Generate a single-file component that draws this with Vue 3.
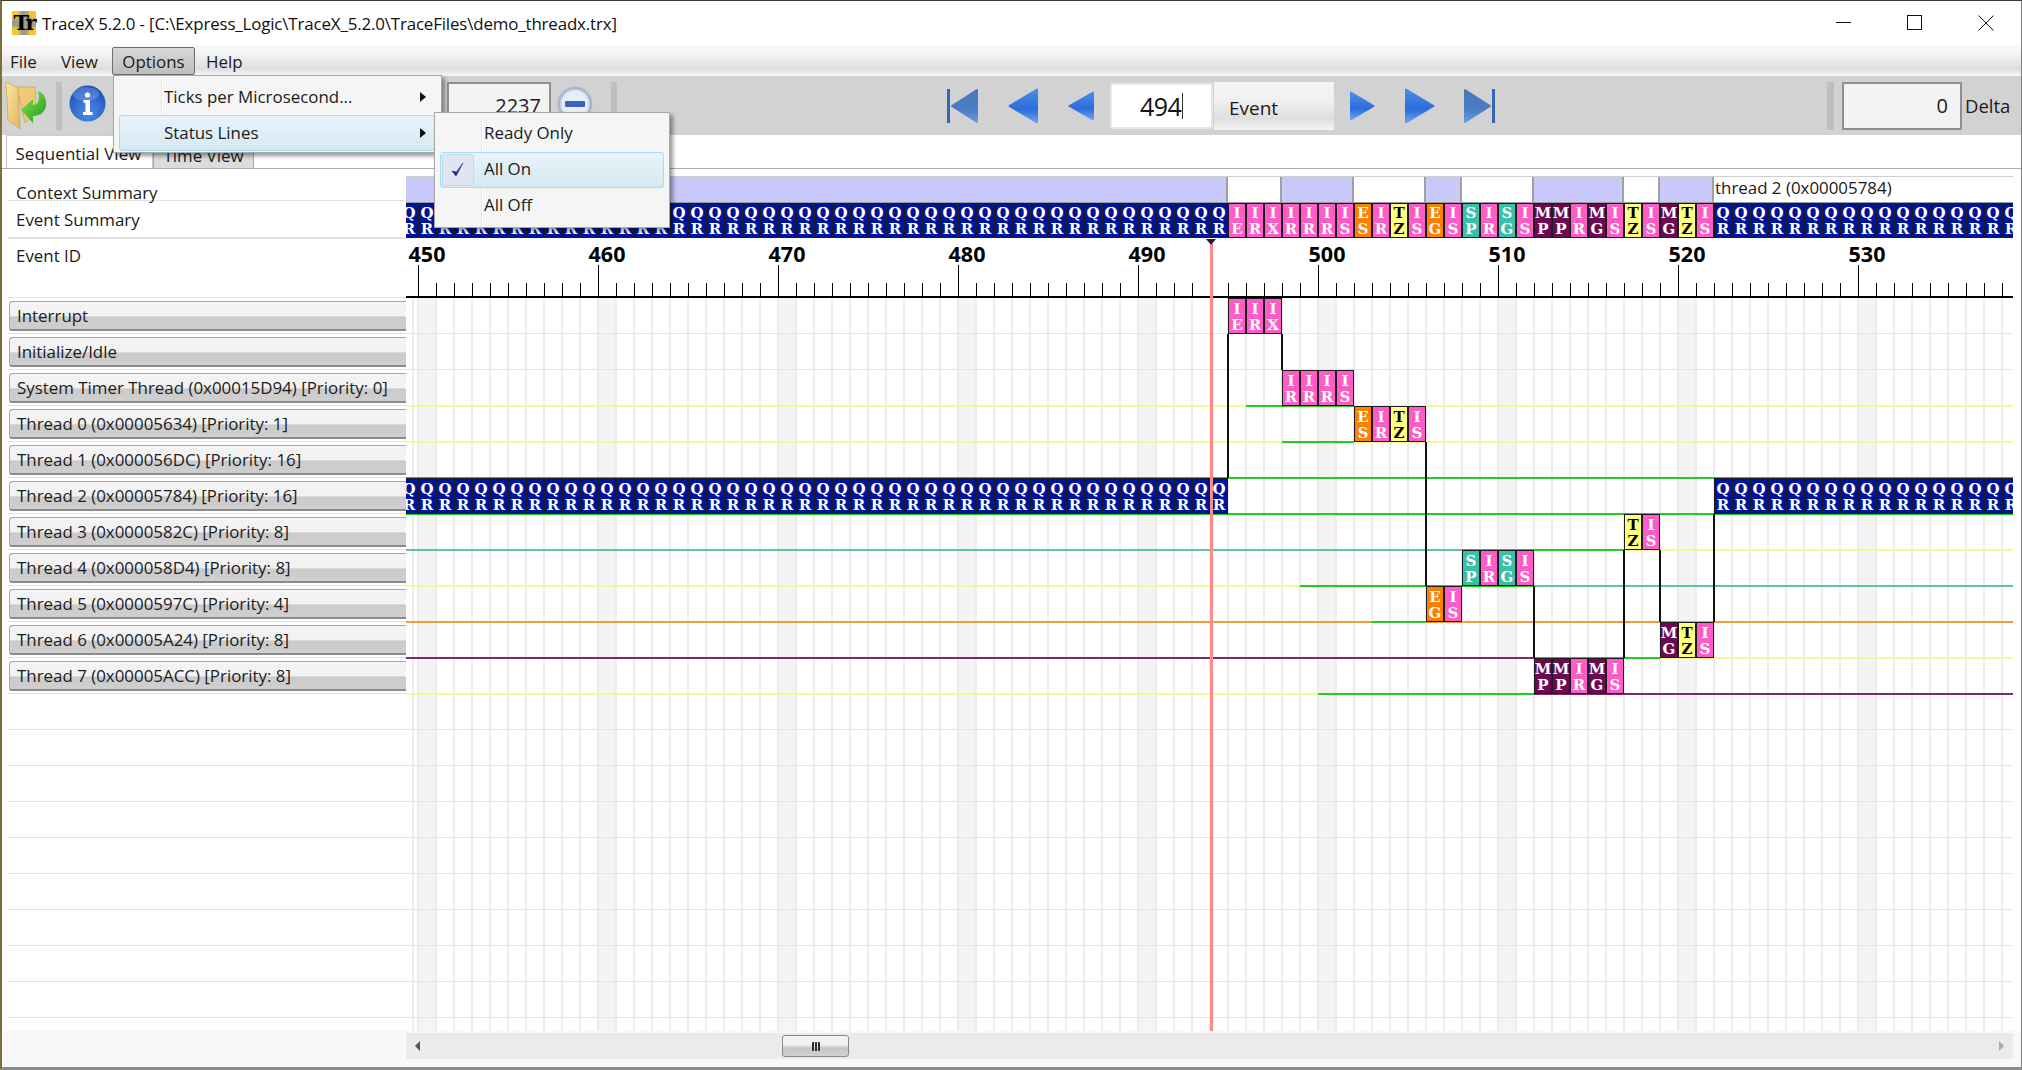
<script setup>
const X0 = 406
const tickX = (n) => 1318 + (n - 500) * 18 - X0

const seq = 'IE IR IX IR IR IR IS ES IR TZ IS EG IS SP IR SG IS MP MP IR MG IS TZ IS MG TZ IS'.split(' ')
const colour = { Q: 'navy', I: 'pink', E: 'orange', T: 'yellow', S: 'teal', M: 'purple' }
const cell = (code, n) => ({ a: code[0], b: code[1], n, cls: colour[code[0]] })

const summary = []
for (let n = 449; n <= 539; n++) {
  const c = n >= 495 && n <= 521 ? seq[n - 495] : 'QR'
  summary.push(cell(c, n))
}

const context = [
  { w: 822, on: true }, { w: 54 }, { w: 72, on: true }, { w: 72 }, { w: 36, on: true },
  { w: 72 }, { w: 90, on: true }, { w: 36 }, { w: 54, on: true }, { w: 299, text: 'thread 2 (0x00005784)' },
]

const labels = []
for (let n = 450; n <= 530; n += 10) labels.push(n)

const rowNames = [
  'Interrupt', 'Initialize/Idle', 'System Timer Thread (0x00015D94) [Priority: 0]',
  'Thread 0 (0x00005634) [Priority: 1]', 'Thread 1 (0x000056DC) [Priority: 16]',
  'Thread 2 (0x00005784) [Priority: 16]', 'Thread 3 (0x0000582C) [Priority: 8]',
  'Thread 4 (0x000058D4) [Priority: 8]', 'Thread 5 (0x0000597C) [Priority: 4]',
  'Thread 6 (0x00005A24) [Priority: 8]', 'Thread 7 (0x00005ACC) [Priority: 8]',
]
const emptyRows = 9

const Y = '#f7f79a', G = '#22cc22', T = '#5fc0b4', O = '#f39a3c', P = '#7c2a6c'
const W = 2013
const statusLines = [
  [2, 406, 1246, Y], [2, 1246, 1354, G], [2, 1354, W, Y],
  [3, 406, 1282, Y], [3, 1282, 1354, G], [3, 1354, W, Y],
  [4, 406, W, G],
  [5, 406, W, G],
  [6, 406, 1462, T], [6, 1462, 1624, G], [6, 1624, W, Y],
  [7, 406, 1300, Y], [7, 1300, 1426, G], [7, 1426, 1534, G], [7, 1534, W, T],
  [8, 406, 1372, O], [8, 1372, 1426, G], [8, 1426, W, O],
  [9, 406, 1534, P], [9, 1534, 1660, G], [9, 1660, W, Y],
  [10, 406, 1318, Y], [10, 1318, 1534, G], [10, 1534, W, P],
].map(([r, a, b, c]) => ({ top: (r + 1) * 36 - 1, left: a - X0, width: b - a, c }))

const connectors = [
  [1228, 36, 180], [1282, 36, 72], [1426, 144, 288], [1534, 288, 360],
  [1624, 252, 360], [1660, 252, 324], [1714, 216, 324],
].map(([x, a, b]) => ({ left: x - X0 - 1, top: a, height: b - a }))

const blocks = []
const place = (row, start, codes) => codes.forEach((c, i) => {
  blocks.push({ ...cell(c, start + i), top: row * 36, left: tickX(start + i) })
})
place(0, 495, ['IE', 'IR', 'IX'])
place(2, 498, ['IR', 'IR', 'IR', 'IS'])
place(3, 502, ['ES', 'IR', 'TZ', 'IS'])
place(5, 449, Array(46).fill('QR'))
place(5, 522, Array(18).fill('QR'))
place(6, 517, ['TZ', 'IS'])
place(7, 508, ['SP', 'IR', 'SG', 'IS'])
place(8, 506, ['EG', 'IS'])
place(9, 519, ['MG', 'TZ', 'IS'])
place(10, 512, ['MP', 'MP', 'IR', 'MG', 'IS'])
</script>

<template>
  <div class="window">
    <header class="titlebar">
      <div class="appicon">Tr</div>
      <div class="title">TraceX 5.2.0 - [C:\Express_Logic\TraceX_5.2.0\TraceFiles\demo_threadx.trx]</div>
      <div class="winbtns">
        <svg width="16" height="16" viewBox="0 0 16 16"><path d="M0 7.5H15" stroke="#111" fill="none" /></svg>
        <svg width="16" height="16" viewBox="0 0 16 16"><rect x="0.5" y="0.5" width="14" height="14" stroke="#111" fill="none" /></svg>
        <svg width="16" height="16" viewBox="0 0 16 16"><path d="M0.5 0.5L15.5 15.5M15.5 0.5L0.5 15.5" stroke="#111" fill="none" /></svg>
      </div>
    </header>

    <nav class="menubar">
      <span class="mi file">File</span>
      <span class="mi view">View</span>
      <span class="mi active">Options</span>
      <span class="mi help">Help</span>
    </nav>

    <section class="toolbar">
      <svg class="ic-folder" width="42" height="47" viewBox="0 0 42 47">
        <defs>
          <linearGradient id="fold" x1="0" y1="0" x2="1" y2="1"><stop offset="0" stop-color="#fbe9a2" /><stop offset="1" stop-color="#e0b45c" /></linearGradient>
          <linearGradient id="arrow" x1="0" y1="0" x2="1" y2="1"><stop offset="0" stop-color="#8fe04c" /><stop offset="1" stop-color="#16a01c" /></linearGradient>
        </defs>
        <path d="M12 5H30L31 31L20 41Z" fill="#f0c878" stroke="#c89640" stroke-width=".6" />
        <path d="M1 0L13 6L15 47L3 38Z" fill="url(#fold)" stroke="#c9a04e" stroke-width=".7" />
        <path d="M16 28L28 17V23C33 23 35 19 33 9C39 11 42 17 41 24C40 30 35 34 28 34V41Z" fill="url(#arrow)" />
      </svg>
      <div class="sep s1"></div>
      <svg class="ic-info" width="37" height="37" viewBox="0 0 37 37">
        <defs>
          <radialGradient id="blue" cx=".5" cy=".75" r=".8"><stop offset="0" stop-color="#4c8fe8" /><stop offset="1" stop-color="#1a49b6" /></radialGradient>
        </defs>
        <circle cx="18.5" cy="18.5" r="18" fill="url(#blue)" />
        <ellipse cx="17" cy="9" rx="13" ry="7" fill="#fff" opacity=".18" />
        <circle cx="18.5" cy="10" r="2.6" fill="#fff" />
        <path d="M14.5 15H21V27H23.5V30H14V27H16.5V18H14.5Z" fill="#fff" />
      </svg>
      <div class="box small">2237</div>
      <svg class="ic-minus" width="36" height="36" viewBox="0 0 36 36">
        <defs>
          <radialGradient id="glass" cx=".5" cy=".5" r=".55"><stop offset="0" stop-color="#eef3fa" /><stop offset=".68" stop-color="#e3ebf6" /><stop offset=".82" stop-color="#9fb3ca" /><stop offset="1" stop-color="#c4ccd6" /></radialGradient>
        </defs>
        <circle cx="18" cy="18" r="17.5" fill="url(#glass)" />
        <rect x="8" y="15" width="20" height="6" rx="1" fill="#3a63c0" />
      </svg>
      <div class="sep s2"></div>

      <svg class="nav n1" width="32" height="36" viewBox="0 0 32 36">
        <defs>
          <linearGradient id="navd" x1="0" y1="0" x2="0" y2="1"><stop offset="0" stop-color="#4a76b6" /><stop offset=".6" stop-color="#4a7cc4" /><stop offset="1" stop-color="#6a9ade" /></linearGradient>
          <linearGradient id="navb" x1="0" y1="0" x2="0" y2="1"><stop offset="0" stop-color="#4a8ce4" /><stop offset=".6" stop-color="#2c6cdc" /><stop offset="1" stop-color="#6aa2ee" /></linearGradient>
        </defs>
        <rect x="0" y="1" width="3" height="34" fill="#3566b4" />
        <path d="M5 18L30 2V34Z" fill="url(#navd)" stroke="url(#navd)" stroke-width="2" stroke-linejoin="round" />
      </svg>
      <svg class="nav n2" width="30" height="36" viewBox="0 0 30 36"><path d="M1.5 18L29 1.5V34.5Z" fill="url(#navb)" stroke="url(#navb)" stroke-width="2" stroke-linejoin="round" /></svg>
      <svg class="nav n3" width="26" height="30" viewBox="0 0 26 30"><path d="M1.5 15L25 1.5V28.5Z" fill="url(#navb)" stroke="url(#navb)" stroke-width="2" stroke-linejoin="round" /></svg>
      <div class="evinput"><span>494</span><i class="caret"></i></div>
      <div class="evbtn">Event</div>
      <svg class="nav n4" width="25" height="30" viewBox="0 0 25 30"><path d="M23.5 15L1 1.5V28.5Z" fill="url(#navb)" stroke="url(#navb)" stroke-width="2" stroke-linejoin="round" /></svg>
      <svg class="nav n5" width="30" height="36" viewBox="0 0 30 36"><path d="M28.5 18L1 1.5V34.5Z" fill="url(#navb)" stroke="url(#navb)" stroke-width="2" stroke-linejoin="round" /></svg>
      <svg class="nav n6" width="31" height="36" viewBox="0 0 31 36">
        <path d="M26 18L1 2V34Z" fill="url(#navd)" stroke="url(#navd)" stroke-width="2" stroke-linejoin="round" />
        <rect x="28" y="1" width="3" height="34" fill="#3566b4" />
      </svg>
      <div class="sep s3"></div>
      <div class="box delta">0</div>
      <div class="deltalabel">Delta</div>
    </section>

    <div class="tabs">
      <div class="tab on">Sequential View</div>
      <div class="tab">Time View</div>
    </div>

    <main class="panel">
      <div class="panelbody">
        <aside class="leftcol">
          <div class="lbl l1">Context Summary</div>
          <div class="lbl l2">Event Summary</div>
          <div class="lbl l3">Event ID</div>
          <div v-for="name in rowNames" :key="name" class="lrow">
            <div class="threadbtn">{{ name }}</div>
          </div>
          <div v-for="i in emptyRows" :key="i" class="lrow"></div>
        </aside>

        <div class="graph">
          <div class="ctx">
            <div
              v-for="(seg, i) in context"
              :key="i"
              class="seg"
              :class="{ on: seg.on }"
              :style="{ width: seg.w + 'px' }"
            >{{ seg.text }}</div>
          </div>
          <div class="strip">
            <div v-for="c in summary" :key="c.n" class="cell" :class="c.cls">
              <span>{{ c.a }}</span><span>{{ c.b }}</span>
            </div>
          </div>
          <div class="ruler">
            <span
              v-for="n in labels"
              :key="n"
              class="rlabel"
              :style="{ left: tickX(n) - 21 + 'px' }"
            >{{ n }}</span>
          </div>
          <div class="chart">
            <div
              v-for="(l, i) in statusLines"
              :key="'s' + i"
              class="status"
              :style="{ top: l.top + 'px', left: l.left + 'px', width: l.width + 'px', background: l.c }"
            ></div>
            <div
              v-for="(c, i) in connectors"
              :key="'c' + i"
              class="conn"
              :style="{ top: c.top + 'px', left: c.left + 'px', height: c.height + 'px' }"
            ></div>
            <div
              v-for="b in blocks"
              :key="b.n"
              class="cell block"
              :class="b.cls"
              :style="{ top: b.top + 'px', left: b.left + 'px' }"
            >
              <span>{{ b.a }}</span><span>{{ b.b }}</span>
            </div>
          </div>
          <div class="cursor"></div>
          <div class="cursorhead"></div>
        </div>
      </div>
      <div class="panelfoot">
        <div class="hscroll">
          <span class="arr left"></span>
          <div class="thumb"><i></i><i></i><i></i></div>
          <span class="arr right"></span>
        </div>
      </div>
    </main>

    <div class="menu m1">
      <div class="gutter g1"></div>
      <div class="item"><span>Ticks per Microsecond...</span><b class="tri"></b></div>
      <div class="item hl"><span>Status Lines</span><b class="tri"></b></div>
    </div>
    <div class="menu m2">
      <div class="gutter g2"></div>
      <div class="item"><span>Ready Only</span></div>
      <div class="item hl">
        <div class="checkbox">
          <svg width="18" height="18" viewBox="0 0 18 18"><path d="M3 10L7 15L14 2L7.5 11Z" fill="#1a2a9a" stroke="#1a2a9a" stroke-width=".6" /></svg>
        </div>
        <span>All On</span>
      </div>
      <div class="item"><span>All Off</span></div>
    </div>
  </div>
</template>

<style scoped>
.window {
  position: relative;
  width: 2022px;
  height: 1070px;
  box-sizing: border-box;
  border-top: 1px solid #3d3a2c;
  border-left: 2px solid #7d6f3a;
  border-bottom: 3px solid #8c8c8c;
  border-right: 1px solid #7d7d7d;
  display: flex;
  flex-direction: column;
  overflow: hidden;
  background: #fff;
  font-family: "Open Sans", "Noto Sans", sans-serif;
  font-size: 16.9px;
  color: #1a1a1a;
}

.titlebar {
  height: 44px;
  flex: none;
  display: flex;
  align-items: center;
  background: #fff;
  position: relative;
}
.appicon {
  margin-left: 10px;
  width: 24px;
  height: 24px;
  background:
    radial-gradient(circle at 2px 2px, #f4c830 0, #f4c830 4px, transparent 8px),
    radial-gradient(circle at 22px 2px, #f4c830 0, #f4c830 4px, transparent 8px),
    radial-gradient(circle at 2px 22px, #f4c830 0, #f4c830 4px, transparent 8px),
    radial-gradient(circle at 22px 22px, #f4c830 0, #f4c830 4px, transparent 8px),
    #9c9c88;
  font-family: "DejaVu Serif", serif;
  font-weight: 700;
  font-size: 21px;
  line-height: 24px;
  letter-spacing: -2px;
  text-align: center;
  color: #000;
}
.title {
  margin-left: 6px;
  font-size: 16.9px;
  letter-spacing: -0.15px;
  color: #111;
}
.winbtns {
  margin-left: auto;
  margin-right: 27px;
  display: flex;
  gap: 55px;
  align-items: center;
  margin-top: -1px;
}

.menubar {
  height: 31px;
  flex: none;
  box-sizing: border-box;
  padding-top: 2px;
  display: flex;
  align-items: stretch;
  background: linear-gradient(#f8f8f8 0, #f4f4f4 8px, #e0dfdf 24px, #f2f2f2 29px, #fafafa 31px);
}
.mi { display: flex; align-items: center; height: 28px; box-sizing: border-box; }
.file { width: 49px; padding-left: 8px; }
.view { width: 61px; padding-left: 10px; }
.mi.active {
  width: 83px;
  justify-content: center;
  border: 1px solid #6e6e6e;
  border-radius: 2px;
  background: linear-gradient(#d8d8d8, #bdbdbd);
}
.help { padding-left: 11px; }

.toolbar {
  height: 59px;
  flex: none;
  display: flex;
  align-items: center;
  background: #d2d2d2;
  position: relative;
}
.ic-folder { margin-left: 3px; flex: none; }
.sep { width: 6px; height: 48px; background: #bfbfbf; flex: none; }
.s1 { margin-left: 9px; }
.ic-info { margin-left: 7px; flex: none; margin-top: -5px; }
.box {
  box-sizing: border-box;
  background: #f3f3f3;
  border: 2px solid #8f8f8f;
  border-radius: 1px;
  height: 48px;
  display: flex;
  align-items: center;
  justify-content: flex-end;
  flex: none;
}
.small { width: 104px; margin-left: 341px; padding-right: 8px; font-size: 20px; }
.ic-minus { margin-left: 6px; flex: none; margin-top: -4px; }
.s2 { margin-left: 18px; }
.nav { flex: none; }
.n1 { margin-left: 330px; }
.n2 { margin-left: 29px; }
.n3 { margin-left: 30px; }
.evinput {
  box-sizing: border-box;
  width: 103px;
  height: 46px;
  margin-left: 16px;
  background: #fff;
  border: 2px solid #e4e6ea;
  border-radius: 2px;
  display: flex;
  align-items: center;
  padding-left: 28px;
  font-size: 25px;
  letter-spacing: -0.6px;
  color: #111;
}
.caret { width: 1px; height: 26px; background: #333; margin-left: 1px; }
.evbtn {
  box-sizing: border-box;
  width: 120px;
  height: 48px;
  margin-left: 1px;
  padding: 13px 0 0 15px;
  background: linear-gradient(#f4f4f4 0, #f0f0f0 40%, #dfdede 75%, #f5f5f5 100%);
  font-size: 19px;
  flex: none;
}
.n4 { margin-left: 16px; }
.n5 { margin-left: 30px; }
.n6 { margin-left: 29px; }
.s3 { margin-left: 332px; width: 7px; }
.delta { width: 120px; margin-left: 8px; padding-right: 12px; font-size: 20px; }
.deltalabel { margin-left: 3px; font-size: 18.5px; }

.tabs {
  height: 33px;
  flex: none;
  display: flex;
  align-items: flex-end;
  padding-left: 4px;
  background: #fff;
}
.tab {
  box-sizing: border-box;
  width: 101px;
  height: 24px;
  display: flex;
  align-items: center;
  justify-content: center;
  background: #dcdcdc;
  border: 1px solid #a8a8a8;
  border-bottom: 0;
  padding-bottom: 2px;
}
.tab.on {
  width: 147px;
  height: 33px;
  background: #fff;
  border-color: #ccc;
  padding: 2px 2px 0 0;
  letter-spacing: 0.1px;
  white-space: nowrap;
}

.panel {
  flex: 1;
  min-height: 0;
  border-top: 1px solid #ababab;
  background: #f8f8f8;
  display: flex;
  flex-direction: column;
}
.panelbody {
  height: 862px;
  flex: none;
  box-sizing: border-box;
  padding-top: 7px;
  padding-left: 6px;
  display: flex;
  background: #fff;
}
.leftcol {
  width: 398px;
  flex: none;
  height: 855px;
  overflow: hidden;
  background: #fff;
}
.lbl { padding-left: 8px; box-sizing: border-box; border-bottom: 1px solid #e2e2e2; }
.l1 { height: 25px; line-height: 34px; }
.l2 { height: 38px; line-height: 38px; border-bottom-width: 2px; }
.l3 { height: 59px; line-height: 34px; }
.lrow {
  height: 36px;
  box-sizing: border-box;
  border-bottom: 1px solid #e0e0e0;
  padding-top: 3px;
  padding-left: 1px;
}
.threadbtn {
  height: 30px;
  box-sizing: border-box;
  padding-left: 7px;
  line-height: 27px;
  border: 1px solid #a6a6a6;
  border-bottom: 2px solid #8a8a8a;
  border-right: 0;
  border-radius: 3px 0 0 3px;
  background: linear-gradient(#f3f3f3 0, #f2f2f2 50%, #cbcbcb 56%, #cfcfcf 100%);
  color: #1c1c1c;
  white-space: nowrap;
  overflow: hidden;
}

.graph {
  position: relative;
  width: 1607px;
  height: 855px;
  flex: none;
  overflow: hidden;
  background: #fff;
}
.ctx {
  height: 27px;
  display: flex;
  box-sizing: border-box;
  border-top: 1px solid #cfcfcf;
  border-bottom: 1px solid #9c9c9c;
}
.seg {
  flex: none;
  box-sizing: border-box;
  border-right: 2px solid #a0a0a0;
  background: #fff;
  line-height: 22px;
  padding-left: 1px;
  white-space: nowrap;
}
.seg:last-child { border-right: 0; }
.seg.on { background: #c8c8fa; }

.strip {
  height: 35px;
  display: flex;
  margin-left: -6px;
}
.cell {
  flex: none;
  width: 18px;
  box-sizing: border-box;
  border: 1px solid #1c1c1c;
  display: flex;
  flex-direction: column;
  align-items: center;
  font-family: "DejaVu Serif", serif;
  font-weight: 700;
  font-size: 15px;
  line-height: 16px;
  padding-top: 1px;
  color: #fff;
  overflow: hidden;
}
.strip .cell { padding-top: 2px; line-height: 15.5px; }
.navy { background: #00149a; }
.pink { background: #ff5cc8; }
.orange { background: #ff8000; }
.yellow { background: #ffff80; color: #000; }
.teal { background: #38c0a8; }
.purple { background: #6c0a50; }

.ruler {
  position: relative;
  height: 60px;
  box-sizing: border-box;
  background:
    linear-gradient(#000, #000) 0 100% / 100% 2px no-repeat,
    repeating-linear-gradient(90deg, #000 0, #000 1px, transparent 1px, transparent 180px) 12px 27px / 100% 31px no-repeat,
    repeating-linear-gradient(90deg, #000 0, #000 1px, transparent 1px, transparent 18px) 12px 45px / 100% 13px no-repeat;
}
.rlabel {
  position: absolute;
  top: 4px;
  width: 60px;
  text-align: center;
  font-weight: 700;
  font-size: 21.5px;
  line-height: 24px;
  color: #000;
}

.chart {
  position: relative;
  height: 733px;
  overflow: hidden;
  background:
    repeating-linear-gradient(180deg, transparent 0, transparent 35px, #e4e4ec 35px, #e4e4ec 36px),
    repeating-linear-gradient(90deg, #ececec 0, #ececec 2px, transparent 2px, transparent 18px) 11px 0,
    repeating-linear-gradient(90deg, #f4f4f4 0, #f4f4f4 18px, transparent 18px, transparent 180px) 12px 0,
    #fff;
}
.status {
  position: absolute;
  height: 2px;
}
.conn {
  position: absolute;
  width: 2px;
  background: #111;
}
.block {
  position: absolute;
  height: 36px;
  padding-top: 2px;
}
.cursor {
  position: absolute;
  left: 804px;
  top: 68px;
  bottom: 0;
  width: 3px;
  background: #ff8a8a;
}
.cursorhead {
  position: absolute;
  left: 800px;
  top: 63px;
  width: 0;
  height: 0;
  border-left: 5px solid transparent;
  border-right: 5px solid transparent;
  border-top: 6px solid #222;
}

.panelfoot {
  flex: 1;
  background: #f8f8f8;
  padding-left: 404px;
  padding-top: 2px;
}
.hscroll {
  position: relative;
  width: 1607px;
  height: 26px;
  background: #ebebeb;
}
.thumb {
  position: absolute;
  left: 376px;
  top: 2px;
  width: 67px;
  height: 22px;
  box-sizing: border-box;
  border: 1px solid #8a8a8a;
  border-radius: 3px;
  background: linear-gradient(#f4f4f4 0, #f0f0f0 45%, #c6c6c6 60%, #d0d0d0 100%);
  display: flex;
  justify-content: center;
  align-items: center;
  gap: 1px;
}
.thumb i { width: 2px; height: 9px; background: #333; }
.arr {
  position: absolute;
  top: 8px;
  width: 0;
  height: 0;
  border-top: 5px solid transparent;
  border-bottom: 5px solid transparent;
}
.arr.left { left: 9px; border-right: 5px solid #555; }
.arr.right { right: 9px; border-left: 5px solid #aaa; }

.menu {
  position: absolute;
  box-sizing: border-box;
  background: #f5f5f5;
  border: 1px solid #a8a8a8;
  box-shadow: 3px 3px 4px rgba(0, 0, 0, 0.4);
}
.m1 { left: 111px; top: 74px; width: 329px; height: 78px; padding: 3px 0 0 5px; }
.m2 { left: 432px; top: 111px; width: 236px; height: 116px; padding: 3px 5px; }
.gutter { position: absolute; top: 4px; bottom: 2px; width: 1px; background: #e6e6e6; box-shadow: 1px 0 0 #fff; }
.g1 { left: 47px; }
.g2 { left: 46px; }
.item {
  position: relative;
  height: 36px;
  box-sizing: border-box;
  border: 1px solid transparent;
  border-radius: 3px;
  display: flex;
  align-items: center;
  padding-bottom: 1px;
}
.m1 .item { padding-left: 44px; width: 316px; }
.m2 .item { padding-left: 43px; width: 224px; padding-bottom: 3px; }
.item.hl {
  background: linear-gradient(#e8f3f9, #d6e9f3);
  border-color: #a6dcf0;
}
.tri {
  position: absolute;
  right: 8px;
  top: 12px;
  width: 0;
  height: 0;
  border-top: 5px solid transparent;
  border-bottom: 5px solid transparent;
  border-left: 6px solid #111;
}
.checkbox {
  position: absolute;
  left: 1px;
  top: 1px;
  width: 32px;
  height: 32px;
  box-sizing: border-box;
  border: 1px solid #c2dbe8;
  border-radius: 3px;
  background: #dfe6f2;
  display: flex;
  align-items: center;
  justify-content: center;
}
</style>

<style>
html, body { margin: 0; background: #fff; }
</style>
